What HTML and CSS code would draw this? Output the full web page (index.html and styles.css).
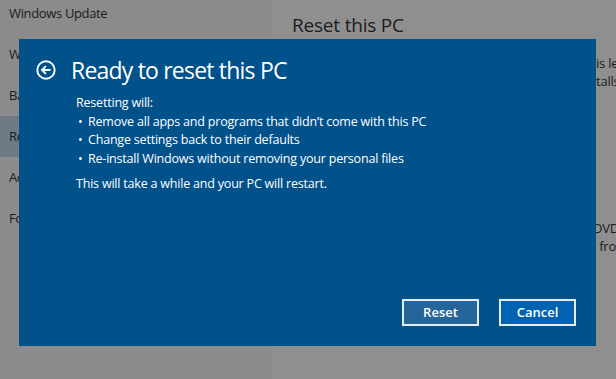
FILE: index.html
```
<!DOCTYPE html>
<html>
  <head>
    <meta charset="UTF-8">
    <meta name="viewport" content="width=device-width, initial-scale=1.0">
    <title>Reset this PC</title>
    <link rel="stylesheet" href="styles.css">
  </head>
  <body>
    <div class="settings">
      <ul class="nav">
        <li>Windows Update</li>
        <li>Windows Defender</li>
        <li>Backup</li>
        <li class="on">Recovery</li>
        <li>Activation</li>
        <li>For developers</li>
      </ul>
      <div class="main">
        <h2>Reset this PC</h2>
        <!-- 每行前半段被对话框挡住,只露出右边一点 -->
        <p class="line"><span class="cut">If your PC isn't running well, resetting it might help. Th</span>is lets you choose to keep</p>
        <p class="line"><span class="cut">your files or remove them, and then reins</span>talls Windows.</p>
        <p class="line gap"><span class="cut short">Start up from a device or disc (such as a USB drive or </span>DVD), change</p>
        <p class="line"><span class="cut">firmware settings, or restore Windows </span>&nbsp;from a system image.</p>
      </div>
    </div>

    <!-- 对话框盖在设置页上面 -->
    <div class="dialog">
      <div class="title">
        <svg class="back" width="20" height="20" viewBox="0 0 20 20">
          <circle cx="10" cy="10" r="8.7" fill="none" stroke="#fff" stroke-width="1.9"/>
          <path d="M14.6 10H6.2M9.9 6.1L6 10l3.9 3.9" fill="none" stroke="#fff" stroke-width="1.9"/>
        </svg>
        <h1>Ready to reset this PC</h1>
      </div>
      <div class="body">
        <p>Resetting will:</p>
        <ul class="list">
          <li>Remove all apps and programs that didn’t come with this PC</li>
          <li>Change settings back to their defaults</li>
          <li>Re-install Windows without removing your personal files</li>
        </ul>
        <p class="note">This will take a while and your PC will restart.</p>
      </div>
      <div class="buttons">
        <a href="javascript:;" class="btn reset">Reset</a>
        <a href="javascript:;" class="btn cancel">Cancel</a>
      </div>
    </div>
  </body>
</html>
```

FILE: styles.css
```
* {
  margin: 0;
  padding: 0;
}

a {
  text-decoration: none;
}

body {
  width: 616px;
  height: 379px;
  overflow: hidden;
  background-color: #8f8f8f;
  font-family: "Open Sans", "Noto Sans", sans-serif;
  color: #1c1c1c;
}

.settings {
  display: flex;
  height: 379px;
}

.nav {
  width: 271px;
  flex-shrink: 0;
  margin-top: -7px;
  list-style: none;
  background-color: #8b8b8b;
}
.nav li {
  height: 41px;
  line-height: 41px;
  padding-left: 9px;
  font-size: 13px;
  letter-spacing: -0.35px;
  white-space: nowrap;
}
.nav li.on {
  background-color: #6e7a86;
}

.main {
  padding: 10px 0 0 21px;
  white-space: nowrap;
}
.main h2 {
  font-size: 19px;
  font-weight: normal;
  letter-spacing: -0.2px;
  line-height: 30px;
  margin-bottom: 14px;
}
.main .line {
  font-size: 13px;
  letter-spacing: -0.2px;
  line-height: 18px;
}
.main .gap {
  margin-top: 129px;
}
.main .cut {
  display: inline-flex;
  justify-content: flex-end;
  width: 304px;
  overflow: hidden;
  vertical-align: top;
}
.main .cut.short {
  width: 301px;
}

.dialog {
  position: absolute;
  left: 19px;
  top: 39px;
  width: 577px;
  height: 307px;
  background-color: #01518b;
  color: #fff;
  display: flex;
  flex-direction: column;
}

.title {
  display: flex;
  align-items: center;
  gap: 15px;
  padding: 16px 0 0 17px;
}
.title .back {
  width: 20px;
  height: 20px;
}
.title h1 {
  font-size: 23px;
  font-weight: normal;
  letter-spacing: -0.8px;
  line-height: 30px;
}

.body {
  padding: 9px 0 0 57px;
  font-size: 12.5px;
  letter-spacing: -0.2px;
  line-height: 18.5px;
}
.list {
  list-style: none;
}
.list li::before {
  content: "•";
  display: inline-block;
  width: 10px;
  padding-left: 2px;
}
.note {
  margin-top: 7px;
}

.buttons {
  margin-top: auto;
  display: flex;
  justify-content: flex-end;
  gap: 20px;
  padding: 0 20px 20px 0;
}
.btn {
  width: 77px;
  height: 27px;
  box-sizing: border-box;
  border: 2px solid #e6ecf2;
  text-align: center;
  line-height: 23px;
  font-size: 13px;
  font-weight: 600;
  color: #fff;
}
.reset {
  background-color: #266599;
}
.cancel {
  background-color: #0062b0;
}
```
